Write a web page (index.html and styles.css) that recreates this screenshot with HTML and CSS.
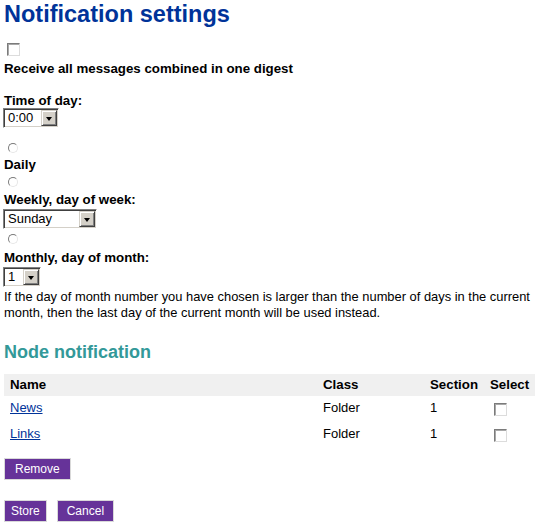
FILE: index.html
```html
<!DOCTYPE html>
<html>
<head>
<meta charset="utf-8">
<title>Notification settings</title>
<link rel="stylesheet" href="styles.css">
</head>
<body>
<div class="page">
  <h1 class="title">Notification settings</h1>

  <form class="settings">
    <input type="checkbox" class="check digest-check">
    <div class="label label-digest">Receive all messages combined in one digest</div>

    <div class="label label-time">Time of day:</div>
    <div class="select sel-time"><span class="sel-value">0:00</span><span class="sel-btn"><span class="tri"></span></span></div>

    <input type="radio" name="freq" class="radio radio-daily">
    <div class="label label-daily">Daily</div>

    <input type="radio" name="freq" class="radio radio-weekly">
    <div class="label label-weekly">Weekly, day of week:</div>
    <div class="select sel-week"><span class="sel-value">Sunday</span><span class="sel-btn"><span class="tri"></span></span></div>

    <input type="radio" name="freq" class="radio radio-monthly">
    <div class="label label-monthly">Monthly, day of month:</div>
    <div class="select sel-month"><span class="sel-value">1</span><span class="sel-btn"><span class="tri"></span></span></div>

    <p class="note">If the day of month number you have chosen is larger than the number of days in the current month, then the last day of the current month will be used instead.</p>

    <h2 class="subtitle">Node notification</h2>

    <table class="nodes">
      <colgroup>
        <col class="c-name"><col class="c-class"><col class="c-section"><col class="c-select">
      </colgroup>
      <thead>
        <tr><th>Name</th><th>Class</th><th>Section</th><th>Select</th></tr>
      </thead>
      <tbody>
        <tr><td><a href="#">News</a></td><td>Folder</td><td>1</td><td><input type="checkbox" class="check row-check"></td></tr>
        <tr><td><a href="#">Links</a></td><td>Folder</td><td>1</td><td><input type="checkbox" class="check row-check"></td></tr>
      </tbody>
    </table>

    <div class="actions actions-remove">
      <button type="button" class="btn btn-remove">Remove</button>
    </div>
    <div class="actions actions-store">
      <button type="button" class="btn btn-store">Store</button>
      <button type="button" class="btn btn-cancel">Cancel</button>
    </div>
  </form>
</div>
</body>
</html>
```

FILE: styles.css
```css
html, body {
  margin: 0;
  padding: 0;
  background: #ffffff;
}

body {
  font-family: "Liberation Sans", Arial, sans-serif;
  font-size: 13px;
  color: #000000;
}

.page {
  padding: 0 2px 0 4px;
}

.title {
  margin: 0;
  font-size: 23.5px;
  line-height: 28px;
  font-weight: bold;
  color: #003399;
}

.settings {
  display: flex;
  flex-direction: column;
  align-items: flex-start;
  margin: 0;
}

.label {
  font-weight: bold;
  font-size: 13.3px;
  line-height: 14px;
}

/* classic checkbox */
.check {
  appearance: none;
  -webkit-appearance: none;
  width: 13px;
  height: 13px;
  margin: 0;
  background: #ffffff;
  border-style: solid;
  border-width: 1px;
  border-color: #7b7b7b #dcdcdc #dcdcdc #7b7b7b;
  box-shadow: inset 1px 1px 0 #a8a8a8;
  box-sizing: border-box;
}

.digest-check {
  margin: 15px 0 0 3px;
}

.label-digest { margin-top: 6px; }
.label-time { margin-top: 18px; }

/* classic radio */
.radio {
  appearance: none;
  -webkit-appearance: none;
  width: 10px;
  height: 10px;
  margin: 0 0 0 4px;
  border-radius: 50%;
  background: #ffffff;
  border-style: solid;
  border-width: 1px;
  border-color: #7b7b7b #e6e6e6 #e6e6e6 #7b7b7b;
  box-sizing: border-box;
}

.radio-daily { margin-top: 15px; }
.label-daily { margin-top: 5px; }
.radio-weekly { margin-top: 5px; }
.label-weekly { margin-top: 6px; }
.radio-monthly { margin-top: 5px; }
.label-monthly { margin-top: 7px; }

/* classic select */
.select {
  display: flex;
  height: 20px;
  margin-left: -1px;
  box-sizing: border-box;
  border-style: solid;
  border-width: 1px;
  border-color: #808080 #ffffff #ffffff #808080;
  box-shadow: inset 1px 1px 0 #404040, inset -1px -1px 0 #d4d0c8;
  padding: 1px;
  background: #ffffff;
}

.sel-time { width: 56px; margin-top: 0; }
.sel-week { width: 94px; margin-top: 2px; }
.sel-month { width: 38px; margin-top: 2px; }

.sel-value {
  flex: 1;
  padding-left: 3px;
  font-size: 13px;
  line-height: 16px;
  white-space: nowrap;
}

.sel-btn {
  width: 16px;
  height: 16px;
  box-sizing: border-box;
  background: #d4d0c8;
  border-style: solid;
  border-width: 1px;
  border-color: #d4d0c8 #404040 #404040 #d4d0c8;
  box-shadow: inset 1px 1px 0 #ffffff, inset -1px -1px 0 #808080;
  display: flex;
  align-items: center;
  justify-content: center;
}

.tri {
  width: 0;
  height: 0;
  border-left: 3.5px solid transparent;
  border-right: 3.5px solid transparent;
  border-top: 4px solid #000000;
  margin-top: 1px;
}

.note {
  margin: 2px 0 0;
  font-size: 12.9px;
  line-height: 16px;
}

.subtitle {
  margin: 20px 0 0;
  font-size: 18px;
  line-height: 22px;
  font-weight: bold;
  color: #339999;
}

.nodes {
  margin-top: 11px;
  width: 531px;
  border-collapse: collapse;
  table-layout: fixed;
}

.c-name { width: 313px; }
.c-class { width: 107px; }
.c-section { width: 60px; }
.c-select { width: 51px; }

.nodes th {
  background: #f0f0f0;
  text-align: left;
  font-weight: bold;
  font-size: 13.3px;
  line-height: 22px;
  height: 22px;
  padding: 0 0 0 6px;
}

.nodes td {
  padding: 4px 0 6px 6px;
  line-height: 16px;
  vertical-align: top;
  font-size: 13px;
}

.nodes a {
  color: #003399;
  text-decoration: underline;
}

.row-check {
  display: block;
  margin: 3px 0 0 4px;
}

.actions {
  display: flex;
  gap: 10px;
}

.actions-remove { margin-top: 10px; }
.actions-store { margin-top: 20px; }

.btn {
  height: 22px;
  padding: 0 8px;
  margin: 0;
  box-sizing: border-box;
  background: #663399;
  color: #ffffff;
  border: 1px solid #d9d9d9;
  font-family: "Liberation Sans", Arial, sans-serif;
  font-size: 12px;
  line-height: 18px;
  cursor: pointer;
}

.btn-remove { padding: 0 10px; }
.btn-store { padding: 0 6px; }
.btn-cancel { padding: 0 9px; }
```
